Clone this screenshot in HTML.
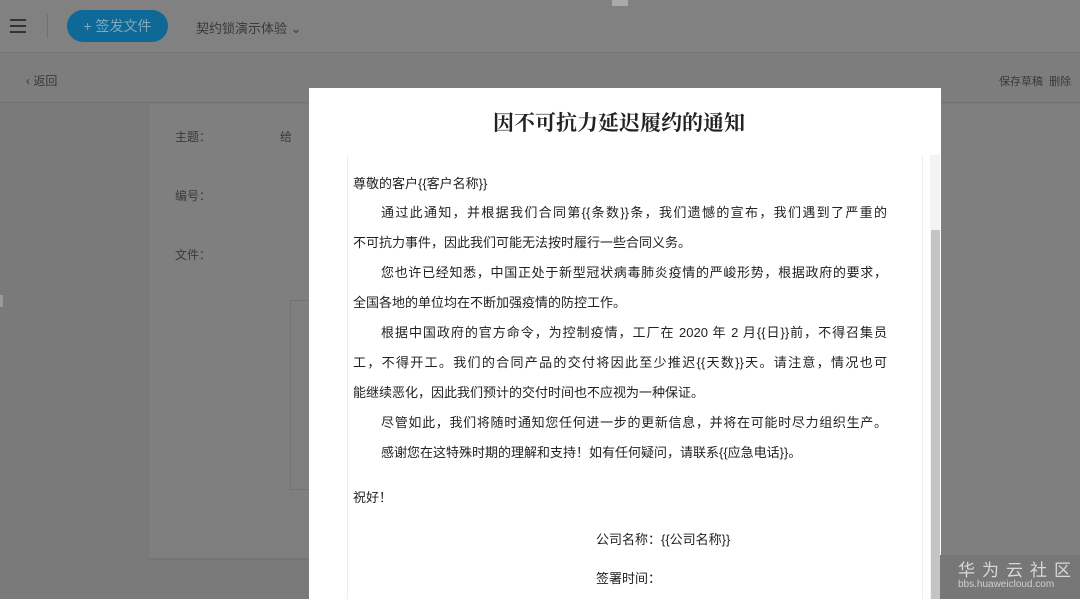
<!DOCTYPE html>
<html><head><meta charset="utf-8"><style>
*{margin:0;padding:0;box-sizing:border-box}
html,body{width:1080px;height:599px;overflow:hidden}
body{background:#7a7a7a;font-family:"Liberation Sans","Noto Sans CJK SC",sans-serif;position:relative;color:#222}
.abs{position:absolute}
.top{left:0;top:0;width:1080px;height:53px;background:#818181;border-bottom:1px solid #747474}
.sub{left:0;top:53px;width:1080px;height:50px;background:#7d7d7d;border-bottom:1px solid #737373}
.card{left:148px;top:104px;width:932px;height:456px;background:#7f7f7f;border-left:1px solid #777;border-bottom:2px solid #747474}
.modal{left:309px;top:88px;width:632px;height:520px;background:#fff}
.doc{left:347px;top:155px;width:576px;height:450px;border-left:1px solid #eee;border-right:1px solid #eee}
.ln{position:absolute;font-size:13px;line-height:16px;color:#222;white-space:nowrap}
.j{text-align:justify;text-align-last:justify}
.g{color:#3a3a3a;font-size:12px}
</style></head><body>
<div class="abs top"></div>
<div class="abs" style="left:10px;top:19px;width:16px;height:2px;background:#333"></div>
<div class="abs" style="left:10px;top:25px;width:16px;height:2px;background:#333"></div>
<div class="abs" style="left:10px;top:31px;width:16px;height:2px;background:#333"></div>
<div class="abs" style="left:47px;top:14px;width:1px;height:24px;background:#6f6f6f"></div>
<div class="abs" style="left:67px;top:10px;width:101px;height:32px;border-radius:16px;background:#0e6996;color:#7fa9c0;font-size:14px;line-height:32px;text-align:center">+ 签发文件</div>
<div class="abs g" style="left:196px;top:18px;font-size:13px">契约锁演示体验 &#8964;</div>
<div class="abs" style="left:612px;top:0;width:16px;height:6px;background:#aaa"></div>
<div class="abs sub"></div>
<div class="abs g" style="left:26px;top:72px">‹ 返回</div>
<div class="abs g" style="left:999px;top:73px;font-size:11px">保存草稿&nbsp;&nbsp;删除</div>
<div class="abs card"></div>
<div class="abs g" style="left:175px;top:128px">主题：</div>
<div class="abs g" style="left:280px;top:128px">给</div>
<div class="abs g" style="left:175px;top:187px">编号：</div>
<div class="abs g" style="left:175px;top:246px">文件：</div>
<div class="abs" style="left:290px;top:300px;width:20px;height:190px;border:1px solid #737373;border-right:none"></div>
<div class="abs" style="left:0;top:295px;width:3px;height:12px;background:#999"></div>
<div class="abs modal"></div>
<div class="abs" style="left:419px;top:107px;width:400px;text-align:center;font-family:'Liberation Serif','Noto Serif CJK SC',serif;font-weight:bold;font-size:21px;color:#222">因不可抗力延迟履约的通知</div>
<div class="abs doc"></div>
<div class="abs" style="left:930px;top:155px;width:10px;height:450px;background:#f3f3f3"></div>
<div class="abs" style="left:931px;top:230px;width:9px;height:370px;background:#c4c4c4"></div>
<div class="ln" style="left:353px;top:176px">尊敬的客户{{客户名称}}</div>
<div class="ln j" style="left:381px;top:205px;width:506px">通过此通知，并根据我们合同第{{条数}}条，我们遗憾的宣布，我们遇到了严重的</div>
<div class="ln" style="left:353px;top:235px">不可抗力事件，因此我们可能无法按时履行一些合同义务。</div>
<div class="ln j" style="left:381px;top:265px;width:506px">您也许已经知悉，中国正处于新型冠状病毒肺炎疫情的严峻形势，根据政府的要求，</div>
<div class="ln" style="left:353px;top:295px">全国各地的单位均在不断加强疫情的防控工作。</div>
<div class="ln j" style="left:381px;top:325px;width:506px">根据中国政府的官方命令，为控制疫情，工厂在 2020 年 2 月{{日}}前，不得召集员</div>
<div class="ln j" style="left:353px;top:355px;width:534px">工，不得开工。我们的合同产品的交付将因此至少推迟{{天数}}天。请注意，情况也可</div>
<div class="ln" style="left:353px;top:385px">能继续恶化，因此我们预计的交付时间也不应视为一种保证。</div>
<div class="ln j" style="left:381px;top:415px;width:506px">尽管如此，我们将随时通知您任何进一步的更新信息，并将在可能时尽力组织生产。</div>
<div class="ln" style="left:381px;top:445px">感谢您在这特殊时期的理解和支持！如有任何疑问，请联系{{应急电话}}。</div>
<div class="ln" style="left:353px;top:490px">祝好！</div>
<div class="ln" style="left:596px;top:532px">公司名称：{{公司名称}}</div>
<div class="ln" style="left:596px;top:571px">签署时间：</div>
<div class="abs" style="left:940px;top:555px;width:140px;height:44px;background:#777"></div>
<div class="abs" style="left:958px;top:556px;font-size:17px;color:#d8d8d8;letter-spacing:7px">华为云社区</div>
<div class="abs" style="left:958px;top:579px;font-size:10px;color:#d0d0d0">bbs.huaweicloud.com</div>
</body></html>
